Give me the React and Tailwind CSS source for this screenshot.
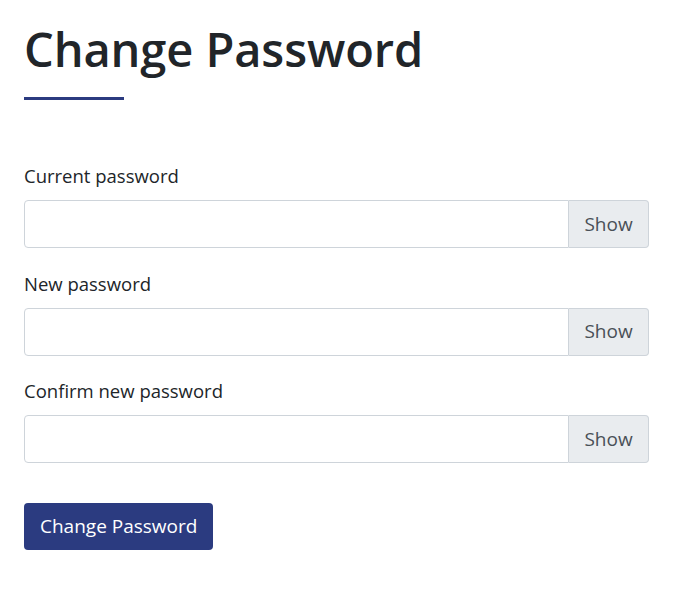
export default function App() {
  const fields = ["Current password", "New password", "Confirm new password"];

  return (
    <div className="min-h-screen bg-white px-6 pt-5 text-[#212529] font-['Open_Sans',sans-serif]">
      {/* Heading */}
      <h1 className="text-[47px] leading-[58px] font-semibold tracking-[-0.1px]">Change Password</h1>
      <div className="mt-[19px] h-[3px] w-[100px] bg-[#2b3b80]" />

      {/* Form */}
      <form className="mt-[62px] w-[625px]" onSubmit={(e) => e.preventDefault()}>
        {fields.map((label) => (
          <div key={label} className="mb-[21.5px]">
            <label className="block text-[18.5px] leading-[27px] mb-[11px]">{label}</label>
            <div className="flex h-[48px]">
              <input
                type="password"
                className="flex-1 min-w-0 rounded-l border border-[#ced4da] bg-white px-4 text-[19px] outline-none"
              />
              <span className="flex w-[80px] items-center justify-center rounded-r border border-l-0 border-[#ced4da] bg-[#e9ecef] text-[19px] text-[#495057]">
                Show
              </span>
            </div>
          </div>
        ))}

        <button
          type="submit"
          className="mt-[18px] h-[47px] rounded bg-[#2b3b80] px-4 text-[19px] text-white"
        >
          Change Password
        </button>
      </form>
    </div>
  );
}
